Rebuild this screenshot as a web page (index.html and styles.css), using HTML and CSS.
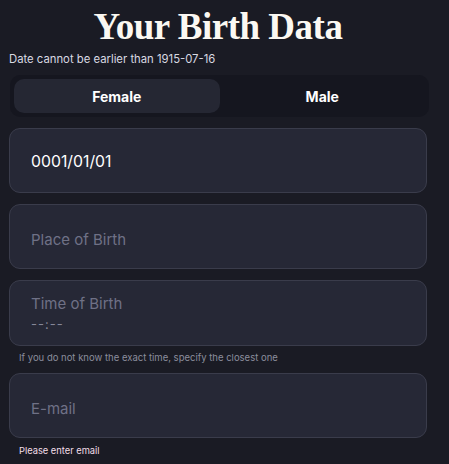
FILE: index.html
```html
<!DOCTYPE html>
<html lang="en">

<head>
    <meta charset="UTF-8">
    <title>Your Birth Data</title>
    <link rel="stylesheet" href="styles.css">
</head>

<body>

    <div class="birth-form">
        <h1 class="form-title">Your Birth Data</h1>
        <div class="date-note">Date cannot be earlier than 1915-07-16</div>

        <div class="gender-tabs">
            <button class="tab active">Female</button>
            <button class="tab">Male</button>
        </div>

        <div class="field">
            <div class="value">0001/01/01</div>
        </div>

        <div class="field">
            <div class="placeholder">Place of Birth</div>
        </div>

        <div class="field field-time">
            <div class="placeholder">Time of Birth</div>
            <div class="time-value">--:--</div>
        </div>
        <div class="hint">If you do not know the exact time, specify the closest one</div>

        <div class="field">
            <div class="placeholder">E-mail</div>
        </div>
        <div class="error">Please enter email</div>
    </div>

</body>

</html>
```

FILE: styles.css
```css
body {
    font-family: Inter, "Noto Sans", sans-serif;
    background: #1a1b24;
    margin: 0;
    color: #fff;
}

.birth-form {
    width: 418px;
    margin-left: 9px;
    padding-top: 6px;
}

.form-title {
    font-family: "Liberation Serif", serif;
    font-size: 37px;
    font-weight: bold;
    text-align: center;
    margin: 0;
    line-height: 42px;
    letter-spacing: -0.5px;
    color: #fbf8f2;
}

.date-note {
    font-size: 11.3px;
    color: #d9d9e2;
    margin-top: 4px;
    line-height: 14px;
}

.gender-tabs {
    display: flex;
    background: #15161f;
    border-radius: 10px;
    padding: 4px;
    margin: 9px -2px 11px 1px;
    height: 34px;
}

.tab {
    flex: 1;
    border: none;
    background: transparent;
    color: #fff;
    font-family: Inter, sans-serif;
    font-size: 14px;
    font-weight: bold;
    border-radius: 10px;
    padding-top: 2px;
}

.tab.active {
    background: #252733;
}

.field {
    height: 63px;
    background: #262836;
    border: 1px solid #3a3c4b;
    border-radius: 11px;
    margin-bottom: 11px;
    padding-left: 21px;
    display: flex;
    flex-direction: column;
    justify-content: center;
    box-sizing: content-box;
}

.value {
    font-size: 15.8px;
    color: #fff;
    padding-top: 2px;
}

.placeholder {
    font-size: 15px;
    color: #6f7186;
    padding-top: 5px;
}

.field-time {
    justify-content: flex-start;
    height: 64px;
    margin-bottom: 6px;
}

.field-time .placeholder {
    padding-top: 13px;
}

.time-value {
    font-size: 13px;
    color: #858798;
    margin-top: 3px;
    letter-spacing: 1px;
}

.hint,
.error {
    padding-left: 10px;
    line-height: 12px;
}

.hint {
    font-size: 9.5px;
    color: #8b8d9c;
    margin-bottom: 9px;
}

.error {
    font-size: 9.3px;
    color: #f3dfe9;
    margin-top: -4px;
}
```
